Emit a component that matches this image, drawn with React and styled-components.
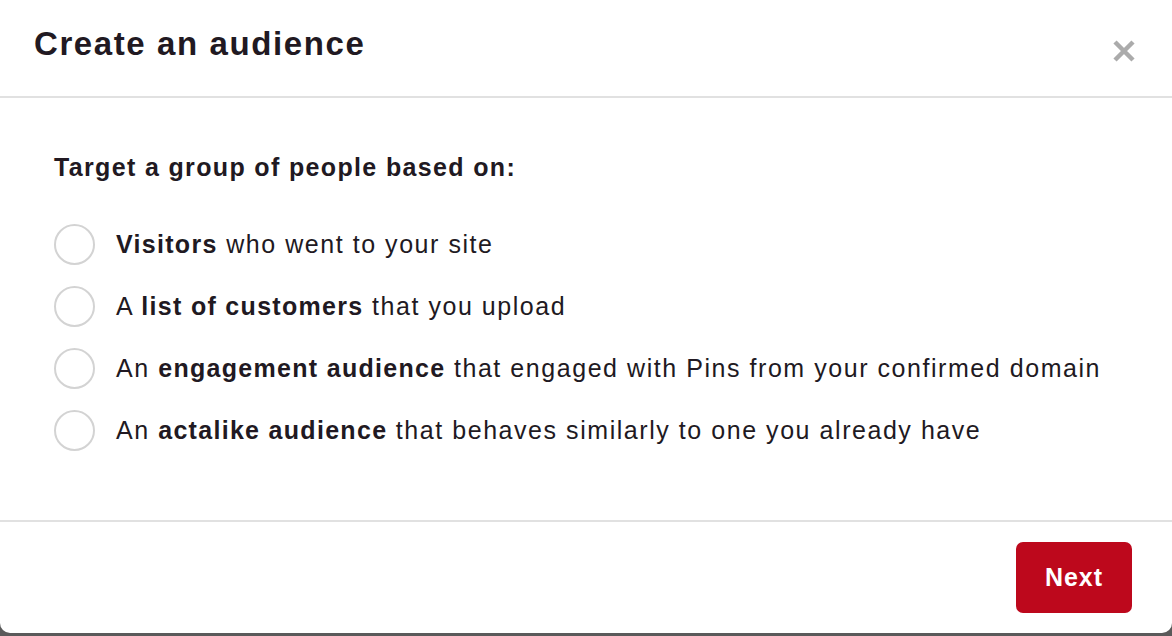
import React from "react";
import styled, { createGlobalStyle } from "styled-components";

const options = [
  { pre: "", bold: "Visitors", post: " who went to your site" },
  { pre: "A ", bold: "list of customers", post: " that you upload" },
  {
    pre: "An ",
    bold: "engagement audience",
    post: " that engaged with Pins from your confirmed domain",
  },
  {
    pre: "An ",
    bold: "actalike audience",
    post: " that behaves similarly to one you already have",
  },
];

export default function App() {
  return (
    <>
      <GlobalStyle />
      <Modal>
        <Header>
          <Title>Create an audience</Title>
          <CloseButton aria-label="Close">
            <svg width="24" height="24" viewBox="0 0 24 24">
              <path
                d="M3 3 L21 21 M21 3 L3 21"
                stroke="#ababab"
                strokeWidth="4.5"
                strokeLinecap="butt"
              />
            </svg>
          </CloseButton>
        </Header>
        <Body>
          <Subtitle>Target a group of people based on:</Subtitle>
          <OptionList>
            {options.map((o) => (
              <Option key={o.bold}>
                <Radio />
                <OptionText>
                  {o.pre}
                  <strong>{o.bold}</strong>
                  {o.post}
                </OptionText>
              </Option>
            ))}
          </OptionList>
        </Body>
        <Footer>
          <NextButton>Next</NextButton>
        </Footer>
      </Modal>
    </>
  );
}

const GlobalStyle = createGlobalStyle`
  html, body {
    margin: 0;
    padding: 0;
    background: #5a5a5a;
    font-family: "Liberation Sans", Arial, sans-serif;
  }
`;

const Modal = styled.div`
  width: 1172px;
  height: 633px;
  background: #fff;
  border-radius: 0 0 10px 10px;
  display: flex;
  flex-direction: column;
  overflow: hidden;
`;

const Header = styled.div`
  height: 96px;
  flex-shrink: 0;
  display: flex;
  align-items: center;
  justify-content: space-between;
  padding: 0 35px 0 34px;
  border-bottom: 2px solid #e1e1e1;
  box-sizing: content-box;
`;

const Title = styled.h1`
  margin: 0 0 8px;
  font-size: 33px;
  line-height: 36px;
  font-weight: 700;
  color: #211922;
  letter-spacing: 1.6px;
`;

const CloseButton = styled.button`
  border: none;
  background: none;
  padding: 0;
  margin-top: 6px;
  width: 26px;
  height: 26px;
  display: flex;
  align-items: center;
  justify-content: center;
  cursor: pointer;
`;

const Body = styled.div`
  flex: 1;
  padding: 55px 54px 0;
  border-bottom: 2px solid #e1e1e1;
`;

const Subtitle = styled.h2`
  margin: 0 0 43px;
  font-size: 25px;
  line-height: 28px;
  font-weight: 700;
  letter-spacing: 1.35px;
  color: #211922;
`;

const OptionList = styled.div`
  display: flex;
  flex-direction: column;
  gap: 22px;
`;

const Option = styled.label`
  display: flex;
  align-items: center;
  gap: 21px;
  height: 40px;
  cursor: pointer;
`;

const Radio = styled.span`
  width: 37px;
  height: 37px;
  border: 2px solid #d3d3d3;
  border-radius: 50%;
  flex-shrink: 0;
`;

const OptionText = styled.span`
  font-size: 25px;
  line-height: 28px;
  letter-spacing: 1.55px;
  color: #211922;

  strong {
    font-weight: 700;
    letter-spacing: 1.3px;
  }
`;

const Footer = styled.div`
  height: 111px;
  flex-shrink: 0;
  display: flex;
  align-items: center;
  justify-content: flex-end;
  padding-right: 40px;
`;

const NextButton = styled.button`
  width: 116px;
  height: 71px;
  border: none;
  border-radius: 7px;
  background: #bd081c;
  color: #fff;
  font-family: "Liberation Sans", Arial, sans-serif;
  font-size: 25px;
  font-weight: 700;
  letter-spacing: 1px;
  cursor: pointer;
`;
